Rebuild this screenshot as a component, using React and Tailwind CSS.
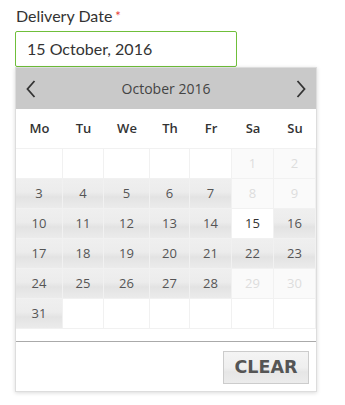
import React from "react";

const rows = [
  [null, null, null, null, null, { d: 1, dis: true }, { d: 2, dis: true }],
  [{ d: 3 }, { d: 4 }, { d: 5 }, { d: 6 }, { d: 7 }, { d: 8, dis: true }, { d: 9, dis: true }],
  [{ d: 10 }, { d: 11 }, { d: 12 }, { d: 13 }, { d: 14 }, { d: 15, sel: true }, { d: 16 }],
  [{ d: 17 }, { d: 18 }, { d: 19 }, { d: 20 }, { d: 21 }, { d: 22 }, { d: 23 }],
  [{ d: 24 }, { d: 25 }, { d: 26 }, { d: 27 }, { d: 28 }, { d: 29, dis: true }, { d: 30, dis: true }],
  [{ d: 31 }, null, null, null, null, null, null],
];

const days = ["Mo", "Tu", "We", "Th", "Fr", "Sa", "Su"];

function Cell({ c }) {
  const base = "h-[30px] flex items-center justify-center border-r border-b border-[#f1f1f1] text-[13px]";
  if (!c) return <div className={`${base} bg-white`} />;
  if (c.dis) return <div className={`${base} bg-[#fafafa] text-[#dddddd]`}>{c.d}</div>;
  if (c.sel) return <div className={`${base} bg-white text-[#333333]`}>{c.d}</div>;
  return (
    <div
      className={`${base} text-[#555555] bg-[linear-gradient(to_bottom,#efefef_0%,#ececec_45%,#e3e3e3_62%,#ebebeb_100%)]`}
    >
      {c.d}
    </div>
  );
}

export default function App() {
  return (
    <div className="w-[345px] h-[405px] bg-white overflow-hidden" style={{ fontFamily: "Lato, 'Open Sans', sans-serif" }}>
      <div className="pl-[16px] pt-[5px] h-[31px] text-[16px] leading-[22px] text-[#333333]">
        Delivery Date<span className="text-[#e53935] text-[13px] ml-[3px] align-top">*</span>
      </div>
      <div className="ml-[15px] w-[222px] h-[36px] border border-[#6fbf3a] rounded-[2px] flex items-center pl-[11px] text-[16px] text-[#333333]">
        15 October, 2016
      </div>
      <div
        className="ml-[15px] w-[302px] border border-[#dddddd] shadow-[0_1px_4px_rgba(0,0,0,0.15)] bg-white"
        style={{ fontFamily: "'Open Sans', sans-serif" }}
      >
        <div className="h-[41px] bg-[#c9c9c9] flex items-center justify-between px-[9px]">
          <svg width="12" height="20" viewBox="0 0 12 20">
            <path d="M9.5 2 L2.5 10 L9.5 18" fill="none" stroke="#333" strokeWidth="1.8" />
          </svg>
          <div className="text-[14px] text-[#444444]">October 2016</div>
          <svg width="12" height="20" viewBox="0 0 12 20">
            <path d="M2.5 2 L9.5 10 L2.5 18" fill="none" stroke="#333" strokeWidth="1.8" />
          </svg>
        </div>
        <div className="grid grid-cols-[47px_41px_46px_40px_42px_42px_42px] h-[39px] items-center">
          {days.map((d) => (
            <div key={d} className="text-center text-[13px] font-semibold text-[#333333]">
              {d}
            </div>
          ))}
        </div>
        <div className="grid grid-cols-[47px_41px_46px_40px_42px_42px_42px] border-t border-[#f1f1f1]">
          {rows.flat().map((c, i) => (
            <Cell key={i} c={c} />
          ))}
        </div>
        <div className="h-[12px]" />
        <div className="border-t border-[#aaaaaa] flex justify-end pt-[9px] pb-[7px] pr-[7px]">
          <div
            className="w-[86px] h-[33px] border border-[#cccccc] flex items-center justify-center text-[17.5px] font-bold text-[#555555] bg-[linear-gradient(to_bottom,#f4f4f4_0%,#efefef_50%,#e6e6e6_65%,#ececec_100%)]"
            style={{ fontFamily: "'DejaVu Sans', sans-serif" }}
          >
            CLEAR
          </div>
        </div>
      </div>
    </div>
  );
}
